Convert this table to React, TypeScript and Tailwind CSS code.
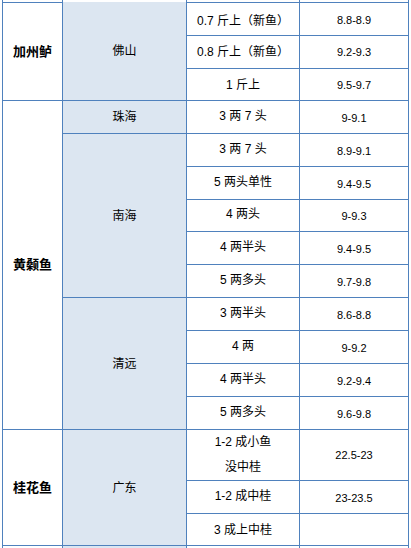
import React from "react";

const cjk = { fontFamily: '"Liberation Sans", "Noto Sans CJK SC", sans-serif' };

function Cell({
  className,
  children,
}: {
  className: string;
  children?: React.ReactNode;
}) {
  return (
    <div
      className={`flex items-center justify-center text-center text-black ${className}`}
      style={cjk}
    >
      {children}
    </div>
  );
}

export default function App() {
  return (
    <div className="w-[411px] h-[548px] overflow-hidden bg-white">
      <div
        className="ml-[2px] mt-[-31px] w-[407px] grid gap-px p-px bg-[#4f81bd] grid-cols-[59px_123px_112px_108px] grid-rows-[32px_32px_32px_31px_32px_32px_32px_31px_32px_32px_32px_32px_32px_32px_50px_32px_31px_20px]"
      >
        {/* top partial row */}
        <Cell className="col-start-1 row-start-1 bg-white" />
        <Cell className="col-start-2 row-start-1 bg-white" />
        <Cell className="col-start-3 row-start-1 bg-white" />
        <Cell className="col-start-4 row-start-1 bg-white" />

        {/* 加州鲈 */}
        <Cell className="col-start-1 row-start-2 row-span-3 bg-white text-[13px] font-bold">
          加州鲈
        </Cell>
        <Cell className="col-start-2 row-start-2 row-span-3 bg-[#dce6f1] text-[12px] mt-[-1px]">
          佛山
        </Cell>
        <Cell className="col-start-3 row-start-2 bg-white text-[12px] pt-[3px]">0.7 斤上（新鱼）</Cell>
        <Cell className="col-start-4 row-start-2 bg-white text-[11px] pt-[3px]">8.8-8.9</Cell>
        <Cell className="col-start-3 row-start-3 bg-white text-[12px]">0.8 斤上（新鱼）</Cell>
        <Cell className="col-start-4 row-start-3 bg-white text-[11px]">9.2-9.3</Cell>
        <Cell className="col-start-3 row-start-4 bg-white text-[12px] pt-px">1 斤上</Cell>
        <Cell className="col-start-4 row-start-4 bg-white text-[11px] pt-px">9.5-9.7</Cell>

        {/* 黄颡鱼 */}
        <Cell className="col-start-1 row-start-5 row-span-10 bg-white text-[13px] font-bold">
          黄颡鱼
        </Cell>
        <Cell className="col-start-2 row-start-5 bg-[#dce6f1] text-[12px]">珠海</Cell>
        <Cell className="col-start-3 row-start-5 bg-white text-[12px] pb-[3px]">3 两 7 头</Cell>
        <Cell className="col-start-4 row-start-5 bg-white text-[11px] pt-[2px]">9-9.1</Cell>

        <Cell className="col-start-2 row-start-6 row-span-5 bg-[#dce6f1] text-[12px]">南海</Cell>
        <Cell className="col-start-3 row-start-6 bg-white text-[12px] pb-[3px]">3 两 7 头</Cell>
        <Cell className="col-start-4 row-start-6 bg-white text-[11px] pt-[2px]">8.9-9.1</Cell>
        <Cell className="col-start-3 row-start-7 bg-white text-[12px] pb-[3px]">5 两头单性</Cell>
        <Cell className="col-start-4 row-start-7 bg-white text-[11px] pt-[2px]">9.4-9.5</Cell>
        <Cell className="col-start-3 row-start-8 bg-white text-[12px] pb-[3px]">4 两头</Cell>
        <Cell className="col-start-4 row-start-8 bg-white text-[11px] pt-[2px]">9-9.3</Cell>
        <Cell className="col-start-3 row-start-9 bg-white text-[12px] pb-[3px]">4 两半头</Cell>
        <Cell className="col-start-4 row-start-9 bg-white text-[11px] pt-[2px]">9.4-9.5</Cell>
        <Cell className="col-start-3 row-start-10 bg-white text-[12px] pb-[3px]">5 两多头</Cell>
        <Cell className="col-start-4 row-start-10 bg-white text-[11px] pt-[2px]">9.7-9.8</Cell>

        <Cell className="col-start-2 row-start-11 row-span-4 bg-[#dce6f1] text-[12px]">清远</Cell>
        <Cell className="col-start-3 row-start-11 bg-white text-[12px] pb-[3px]">3 两半头</Cell>
        <Cell className="col-start-4 row-start-11 bg-white text-[11px] pt-[2px]">8.6-8.8</Cell>
        <Cell className="col-start-3 row-start-12 bg-white text-[12px] pb-[3px]">4 两</Cell>
        <Cell className="col-start-4 row-start-12 bg-white text-[11px] pt-[2px]">9-9.2</Cell>
        <Cell className="col-start-3 row-start-13 bg-white text-[12px] pb-[3px]">4 两半头</Cell>
        <Cell className="col-start-4 row-start-13 bg-white text-[11px] pt-[2px]">9.2-9.4</Cell>
        <Cell className="col-start-3 row-start-14 bg-white text-[12px] pb-[3px]">5 两多头</Cell>
        <Cell className="col-start-4 row-start-14 bg-white text-[11px] pt-[2px]">9.6-9.8</Cell>

        {/* 桂花鱼 */}
        <Cell className="col-start-1 row-start-15 row-span-3 bg-white text-[13px] font-bold">
          桂花鱼
        </Cell>
        <Cell className="col-start-2 row-start-15 row-span-3 bg-[#dce6f1] text-[12px]">广东</Cell>
        <Cell className="col-start-3 row-start-15 bg-white text-[12px] leading-[25px] flex-col">
          <span>1-2 成小鱼</span>
          <span>没中桂</span>
        </Cell>
        <Cell className="col-start-4 row-start-15 bg-white text-[11px]">22.5-23</Cell>
        <Cell className="col-start-3 row-start-16 bg-white text-[12px] pb-[3px]">1-2 成中桂</Cell>
        <Cell className="col-start-4 row-start-16 bg-white text-[11px] pt-[2px]">23-23.5</Cell>
        <Cell className="col-start-3 row-start-17 bg-white text-[12px]">3 成上中桂</Cell>
        <Cell className="col-start-4 row-start-17 bg-white text-[11px]" />

        {/* bottom partial row */}
        <Cell className="col-start-1 row-start-18 bg-white" />
        <Cell className="col-start-2 row-start-18 bg-[#dce6f1]" />
        <Cell className="col-start-3 row-start-18 bg-white" />
        <Cell className="col-start-4 row-start-18 bg-white" />
      </div>
    </div>
  );
}
